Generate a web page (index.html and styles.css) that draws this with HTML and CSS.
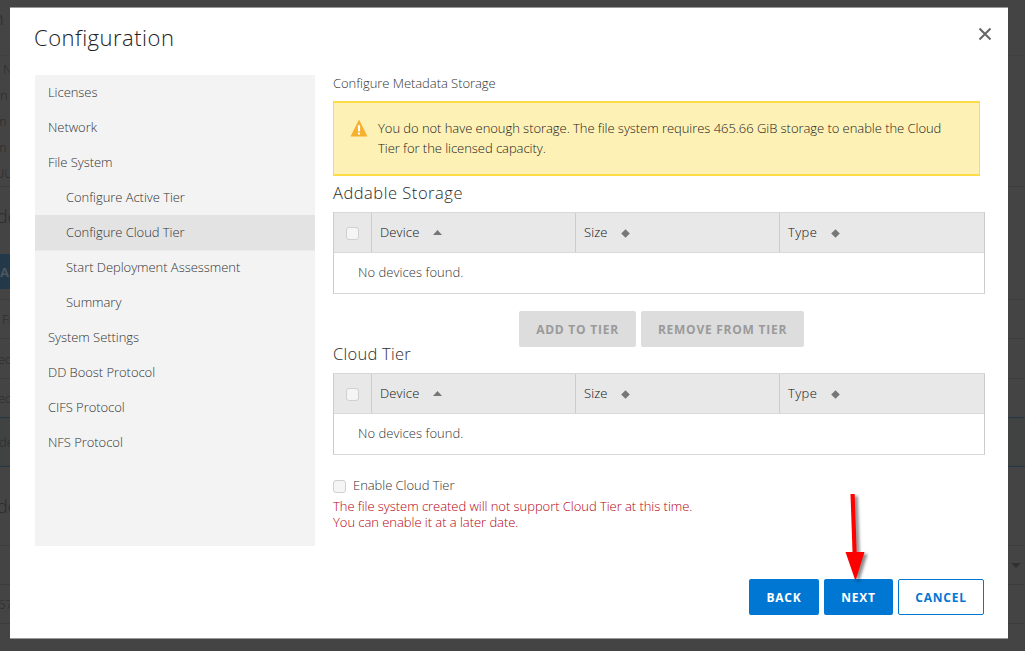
FILE: index.html
```html
<!DOCTYPE html>
<html lang="en">
<head>
<meta charset="utf-8">
<title>Configuration</title>
<link rel="stylesheet" href="styles.css">
</head>
<body>
<div class="backdrop" aria-hidden="true">
  <div class="bg-row bg-top">n</div>
  <div class="bg-row bg-line-a"></div>
  <div class="bg-row bg-field in">N</div>
  <div class="bg-row bg-field">n</div>
  <div class="bg-row bg-field cut">m</div>
  <div class="bg-row bg-field cut">m</div>
  <div class="bg-row bg-field lined">UU</div>
  <div class="bg-row bg-title">de</div>
  <div class="bg-row bg-gap"></div>
  <div class="bg-row bg-button"><span>AI</span></div>
  <div class="bg-row bg-gap lined"></div>
  <div class="bg-row bg-cell in lined">Fi</div>
  <div class="bg-row bg-cell tall lined">ec</div>
  <div class="bg-row bg-cell blue">ec</div>
  <div class="bg-row bg-selected blue">de</div>
  <div class="bg-row bg-section lined">de</div>
  <div class="bg-row bg-cell caret-row lined"><svg width="10" height="5"><path d="M0 0h10L5 5z" fill="#303030"/></svg></div>
  <div class="bg-row bg-cell lined">67</div>
</div>

<main class="modal">
  <header class="modal-header">
    <h1 class="modal-title">Configuration</h1>
    <svg class="close" width="14" height="14" viewBox="0 0 14 14"><path d="M1.5 1.5l11 11M12.500 1.500l-11 11" stroke="#666" stroke-width="2" fill="none"/></svg>
  </header>
  <div class="modal-body">
    <nav class="steps">
      <a class="step">Licenses</a>
      <a class="step">Network</a>
      <a class="step">File System</a>
      <a class="step sub">Configure Active Tier</a>
      <a class="step sub active">Configure Cloud Tier</a>
      <a class="step sub">Start Deployment Assessment</a>
      <a class="step sub">Summary</a>
      <a class="step">System Settings</a>
      <a class="step">DD Boost Protocol</a>
      <a class="step">CIFS Protocol</a>
      <a class="step">NFS Protocol</a>
    </nav>
    <section class="content">
      <div class="intro">Configure Metadata Storage</div>
      <div class="alert">
        <svg class="warn" width="18" height="18" viewBox="0 0 18 18"><path d="M9 .5L17.500 17.500H.5z" fill="#f5b02e"/><path d="M7.900 6.200h2.200v6H7.900zM7.900 13.400h2.200v2.100H7.900z" fill="#fff"/></svg>
        <p class="alert-text">You do not have enough storage. The file system requires 465.66 GiB storage to enable the Cloud<br>Tier for the licensed capacity.</p>
      </div>
      <h2 class="heading addable">Addable Storage</h2>
      <div class="grid">
        <div class="grid-head">
          <div class="cell check"><span class="box"></span></div>
          <div class="cell"><span class="c-device">Device</span><svg class="asc" width="9" height="5"><path d="M4.500 0L9 5H0z" fill="#777"/></svg></div>
          <div class="cell"><span class="c-size">Size</span><svg width="9" height="9"><path d="M4.500 .2L8.800 4.500 4.500 8.800.2 4.500z" fill="#777"/></svg></div>
          <div class="cell"><span class="c-type">Type</span><svg width="9" height="9"><path d="M4.500 .2L8.800 4.500 4.500 8.800.2 4.500z" fill="#777"/></svg></div>
        </div>
        <div class="grid-empty">No devices found.</div>
      </div>
      <div class="move-buttons">
        <button class="btn disabled add">ADD TO TIER</button>
        <button class="btn disabled remove">REMOVE FROM TIER</button>
      </div>
      <h2 class="heading cloud">Cloud Tier</h2>
      <div class="grid">
        <div class="grid-head">
          <div class="cell check"><span class="box"></span></div>
          <div class="cell"><span class="c-device">Device</span><svg class="asc" width="9" height="5"><path d="M4.500 0L9 5H0z" fill="#777"/></svg></div>
          <div class="cell"><span class="c-size">Size</span><svg width="9" height="9"><path d="M4.500 .2L8.800 4.500 4.500 8.800.2 4.500z" fill="#777"/></svg></div>
          <div class="cell"><span class="c-type">Type</span><svg width="9" height="9"><path d="M4.500 .2L8.800 4.500 4.500 8.800.2 4.500z" fill="#777"/></svg></div>
        </div>
        <div class="grid-empty">No devices found.</div>
      </div>
      <label class="enable"><span class="box"></span>Enable Cloud Tier</label>
      <p class="error">The file system created will not support Cloud Tier at this time.<br>You can enable it at a later date.</p>
    </section>
  </div>
  <footer class="modal-footer">
    <button class="btn primary back">BACK</button>
    <button class="btn primary next">NEXT</button>
    <button class="btn outline">CANCEL</button>
  </footer>
  <svg class="arrow" width="34" height="96" viewBox="0 0 34 96"><path d="M10.500 4h4.200l2 58H24.500L15.500 91 5.500 62h7z" fill="#f00"/></svg>
</main>
</body>
</html>
```
FILE: styles.css
```css
* { box-sizing: border-box; }
body {
  margin: 0;
  width: 1025px;
  height: 651px;
  overflow: hidden;
  position: relative;
  background: #444;
  color: #333;
  font: 300 13px/20px "Open Sans", sans-serif;
  letter-spacing: -.05px;
}
h1, h2, p { margin: 0; font-weight: inherit; }

/* Dimmed page behind the dialog */
.backdrop { display: flex; flex-direction: column; color: #2a2a2a; }
.bg-row { flex: none; display: flex; align-items: center; height: 26px; overflow: hidden; white-space: nowrap; }
.bg-top { height: 36px; font-size: 18px; text-indent: -7px; }
.bg-line-a { height: 20px; border-bottom: 1px solid #404040; }
.bg-field.cut { text-indent: -5px; }
.bg-field.lined { height: 27px; text-indent: -5px; }
.in { padding-left: 3px; }
.lined { border-bottom: 1px solid #3c3c3c; }
.bg-title { height: 57px; font-size: 18px; text-indent: -3px; }
.bg-gap { height: 10px; }
.bg-gap.lined { height: 11px; }
.bg-button { height: 35px; font-weight: 700; color: #4c565c; }
.bg-button span { display: flex; align-items: center; width: 40px; height: 35px; background: #23394a; }
.bg-cell { height: 39px; text-indent: -2px; }
.bg-cell.tall { height: 40px; }
.bg-cell.in { padding-left: 4px; }
.blue { border-bottom: 1px solid #243746; }
.bg-selected { height: 49px; background: #404342; text-indent: -1px; }
.bg-section { height: 79px; font-size: 18px; text-indent: -3px; }
.caret-row { justify-content: flex-end; padding-right: 4px; }

.modal {
  position: absolute;
  left: 10px;
  top: 7px;
  width: 998px;
  height: 632px;
  display: flex;
  flex-direction: column;
  background: #fff;
  border-top: 1px solid #999;
  border-bottom: 1px solid #999;
}
.modal-header { display: flex; justify-content: space-between; height: 67px; padding: 14px 16px 0 24px; }
.modal-title { font-size: 22px; line-height: 30px; letter-spacing: .5px; color: #222; white-space: nowrap; }
.close { margin-top: 5px; }
.modal-body { display: flex; gap: 18px; height: 471px; padding-left: 25px; }

.steps { width: 280px; height: 471px; background: #f3f3f3; display: flex; flex-direction: column; }
.step { height: 35px; padding-left: 13px; line-height: 35px; white-space: nowrap; }
.step.sub { padding-left: 31px; }
.step.active { background: #e3e3e3; box-shadow: 0 1px #ebebeb; }

.content { width: 652px; white-space: nowrap; }
.intro { height: 26px; line-height: 17px; }
.alert { display: flex; width: 647px; height: 75px; padding: 15px 0 0 15px; background: #fef1b5; border: 2px solid #ffdc47; border-left-width: 1px; border-right-width: 1px; }
.warn { margin: 1px 10px 0 1px; }
.alert-text { color: #222; }
.heading { font-size: 16.5px; line-height: 24px; color: #2c2c2c; }
.addable { margin: 5px 0 7px; letter-spacing: .52px; }
.cloud { margin: -5px 0 7px; letter-spacing: .25px; }

.grid { height: 82px; border: 1px solid #ccc; border-top-color: #d8d8d8; border-bottom-color: #d8d8d8; }
.grid-head { display: grid; grid-template-columns: 37px 204px 204px 1fr; height: 40px; background: #e8e8e8; border-bottom: 1px solid #d9d9d9; }
.cell { display: flex; align-items: center; height: 39px; padding: 0 0 1px 8px; border-left: 1px solid #ccc; color: #111; }
.cell.check { border-left: 0; padding-left: 12px; }
.cell svg { margin: 2px 0 0 .5px; }
.cell svg.asc { margin-top: 0; }
.c-device { width: 52px; letter-spacing: .15px; }
.c-size { width: 36px; letter-spacing: .1px; }
.c-type { width: 42px; letter-spacing: .4px; }
.grid-empty { line-height: 39px; padding-left: 24px; letter-spacing: .05px; }
.box { flex: none; width: 13px; height: 13px; margin-top: 2px; background: #f5f5f5; border: 1px solid #d0d0d0; border-radius: 3px; }

.move-buttons { display: flex; gap: 5px; padding: 17px 0 0 186px; }
.btn { height: 36px; padding: 2px 0 0; border: 0; border-radius: 2px; font: 700 12px/34px "Open Sans", sans-serif; letter-spacing: .75px; white-space: nowrap; text-align: center; }
.disabled { background: #ddd; color: #9a9a9a; }
.add { width: 117px; }
.remove { width: 163px; }

.enable { display: flex; gap: 7px; height: 20px; margin-top: 20px; }
.enable .box { margin-top: 5px; }
.error { margin-top: 3px; line-height: 16px; color: #b80010; }

.modal-footer { display: flex; justify-content: flex-end; gap: 5px; padding: 33px 24px 0 0; }
.primary { background: #0077d2; color: #fff; }
.back { width: 70px; }
.next { width: 69px; }
.outline { width: 86px; padding-top: 1px; background: #fff; color: #0077d2; border: 1px solid #0077d2; }
.arrow { position: absolute; left: 830px; top: 482px; filter: drop-shadow(3px 2px 1.5px rgba(0, 0, 0, .45)); }
```
